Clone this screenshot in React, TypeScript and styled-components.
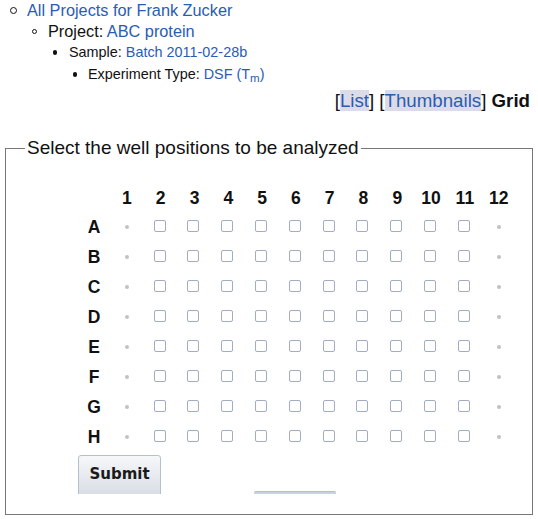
import React from "react";
import styled, { createGlobalStyle } from "styled-components";

const Global = createGlobalStyle`
  html, body { margin: 0; padding: 0; background: #fff; }
  body { font-family: "Liberation Sans", Arial, sans-serif; color: #111; }
`;

const Page = styled.div`
  width: 538px;
  height: 519px;
  overflow: hidden;
`;

const Tree = styled.ul<{ $indent: number }>`
  list-style: none;
  margin: 0;
  padding: 0 0 0 ${(p) => p.$indent}px;
`;

const Item = styled.li<{ $lh: number; $dot: number; $hollow?: boolean; $bw?: number; $off?: number }>`
  position: relative;
  line-height: ${(p) => p.$lh}px;
  &::before {
    content: "";
    position: absolute;
    left: ${(p) => -(p.$off ?? 14) - p.$dot / 2}px;
    top: ${(p) => p.$lh / 2 - p.$dot / 2}px;
    width: ${(p) => p.$dot}px;
    height: ${(p) => p.$dot}px;
    box-sizing: border-box;
    border-radius: 50%;
    background: ${(p) => (p.$hollow ? "transparent" : "#111")};
    border: ${(p) => (p.$hollow ? `${p.$bw ?? 1}px solid #111` : "none")};
  }
`;

const Line = styled.div<{ $size: number; $lh: number }>`
  font-size: ${(p) => p.$size}px;
  line-height: ${(p) => p.$lh}px;
  white-space: nowrap;
`;

const Link = styled.a`
  color: #2a5cb3;
  text-decoration: none;
`;

const Sub = styled.sub`
  font-size: 0.8em;
  line-height: 0;
  vertical-align: -0.3em;
`;

const ViewBar = styled.div`
  margin-top: 4px;
  padding-right: 8px;
  text-align: right;
  font-size: 18.7px;
  line-height: 22px;
  white-space: nowrap;
`;

const ViewLink = styled.a`
  color: #2a5cb3;
  text-decoration: none;
  background: #dcdce8;
`;

const Current = styled.b`
  font-weight: bold;
  color: #111;
`;

const Fieldset = styled.fieldset`
  margin: 25px 5px 0 5px;
  padding: 0 19px 20px 19px;
  border: 1px solid #787878;
  min-width: 0;
`;

const Legend = styled.legend`
  padding: 0 2px;
  font-size: 19px;
  line-height: 22px;
  color: #111;
`;

const Grid = styled.div`
  margin: 24px 0 0 53px;
  display: grid;
  grid-template-columns: 32px repeat(12, 33.8px);
  grid-template-rows: 29px repeat(8, 30px);
  align-items: center;
  justify-items: center;
`;

const Head = styled.div`
  font-weight: bold;
  font-size: 17.5px;
  line-height: 20px;
  color: #111;
`;

const Box = styled.input`
  appearance: none;
  -webkit-appearance: none;
  margin: 0;
  width: 12px;
  height: 12px;
  border: 1px solid #a2adc1;
  border-radius: 2px;
  background: #fff;
  box-sizing: border-box;
  position: relative;
  top: -1px;
  left: -1px;
`;

const Dot = styled.span`
  width: 4px;
  height: 4px;
  border-radius: 50%;
  background: #c2c2c6;
`;

const Actions = styled.div`
  margin: 3px 0 0 53px;
  height: 39px;
  overflow: hidden;
  display: flex;
  align-items: flex-start;
`;

const SubmitButton = styled.button`
  width: 83px;
  height: 44px;
  margin: 0;
  padding: 0 0 6px 0;
  border: 1px solid #b5c0cd;
  border-radius: 3px;
  background: linear-gradient(#f6f7f9, #d6dce3);
  font-family: "DejaVu Sans", sans-serif;
  font-weight: bold;
  font-size: 15px;
  color: #1a1a1a;
`;

const Ghost = styled.div`
  margin: 36px 0 0 93px;
  width: 82px;
  height: 10px;
  border-top: 1px solid #b4bcd6;
  border-radius: 2px 2px 0 0;
  background: #c7d3e4;
`;

const cols = Array.from({ length: 12 }, (_, i) => i + 1);
const rows = ["A", "B", "C", "D", "E", "F", "G", "H"];

export default function App() {
  return (
    <Page>
      <Global />
      <Tree $indent={27}>
        <Item $lh={21} $dot={7} $hollow $bw={1.3}>
          <Line $size={16.3} $lh={21}>
            <Link href="#">All Projects for Frank Zucker</Link>
          </Line>
          <Tree $indent={21}>
            <Item $lh={21} $dot={5} $hollow>
              <Line $size={16.3} $lh={21}>
                Project: <Link href="#">ABC protein</Link>
              </Line>
              <Tree $indent={21}>
                <Item $lh={21} $dot={4.6}>
                  <Line $size={14.4} $lh={21}>
                    Sample: <Link href="#">Batch 2011-02-28b</Link>
                  </Line>
                  <Tree $indent={19}>
                    <Item $lh={23} $dot={4.2} $off={13}>
                      <Line $size={14.4} $lh={23}>
                        Experiment Type:{" "}
                        <Link href="#">
                          DSF (T<Sub>m</Sub>)
                        </Link>
                      </Line>
                    </Item>
                  </Tree>
                </Item>
              </Tree>
            </Item>
          </Tree>
        </Item>
      </Tree>

      <ViewBar>
        [<ViewLink href="#">List</ViewLink>] [<ViewLink href="#">Thumbnails</ViewLink>]{" "}
        <Current>Grid</Current>
      </ViewBar>

      <form onSubmit={(e) => e.preventDefault()}>
        <Fieldset>
          <Legend>Select the well positions to be analyzed</Legend>
          <Grid>
            <span />
            {cols.map((c) => (
              <Head key={c}>{c}</Head>
            ))}
            {rows.map((r) => (
              <React.Fragment key={r}>
                <Head>{r}</Head>
                {cols.map((c) =>
                  c === 1 || c === 12 ? (
                    <Dot key={c} />
                  ) : (
                    <Box key={c} type="checkbox" name={`${r}${c}`} aria-label={`${r}${c}`} />
                  )
                )}
              </React.Fragment>
            ))}
          </Grid>
          <Actions>
            <SubmitButton type="submit">Submit</SubmitButton>
            <Ghost />
          </Actions>
        </Fieldset>
      </form>
    </Page>
  );
}
